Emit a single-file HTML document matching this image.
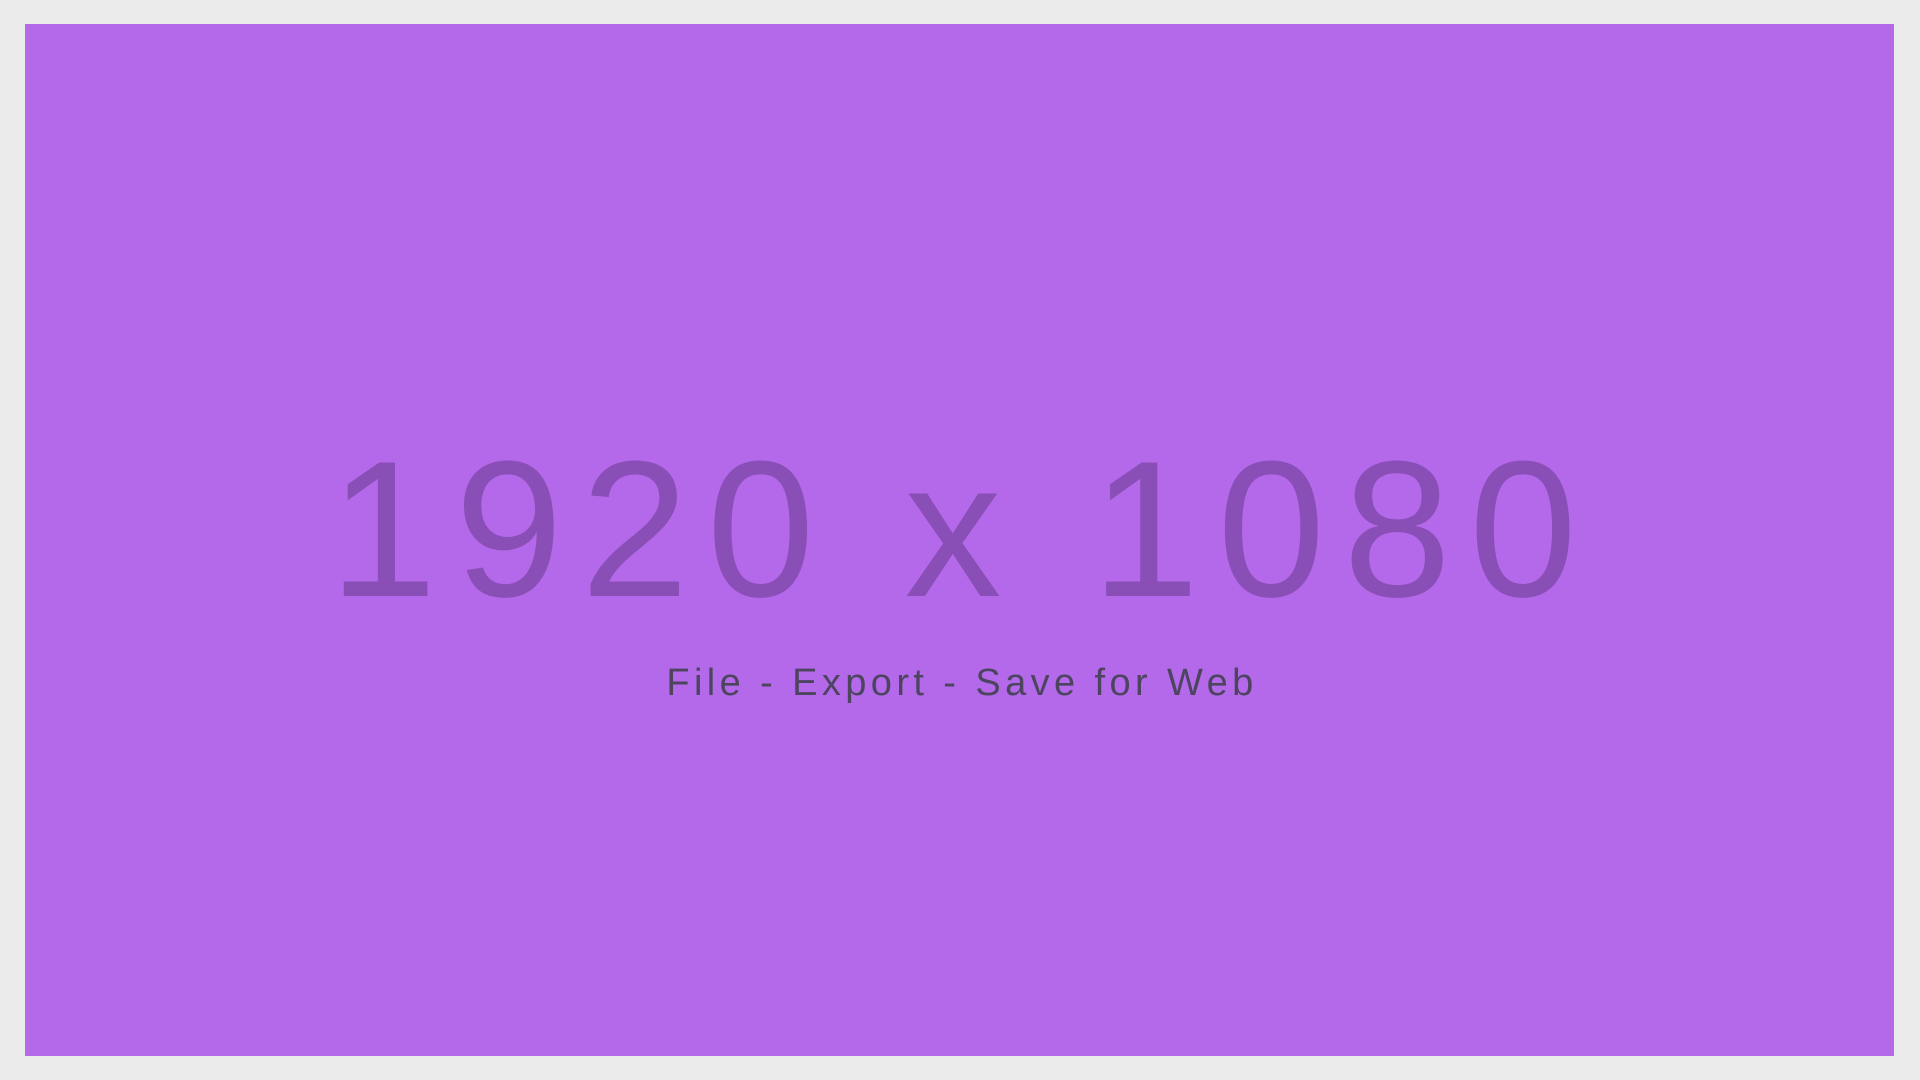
<!DOCTYPE html>
<html><head><style>
html,body{margin:0;padding:0;width:1920px;height:1080px;background:#ebebeb;overflow:hidden}
.box{position:absolute;left:25px;top:24px;width:1869px;height:1032px;background:#b469ea}
.big{position:absolute;left:0;width:1920px;top:420px;text-align:center;font-family:"Liberation Sans",sans-serif;font-size:194px;line-height:220px;color:#8a4fb6;letter-spacing:18px;text-indent:4px;white-space:nowrap}
.sub{position:absolute;left:0;width:1920px;top:661px;text-align:center;font-family:"Liberation Sans",sans-serif;font-size:38px;line-height:44px;color:#4d4560;letter-spacing:4.4px;text-indent:4px;white-space:nowrap}
</style></head><body>
<div class="box"></div>
<div class="big">1920 x 1080</div>
<div class="sub">File - Export - Save for Web</div>
</body></html>
